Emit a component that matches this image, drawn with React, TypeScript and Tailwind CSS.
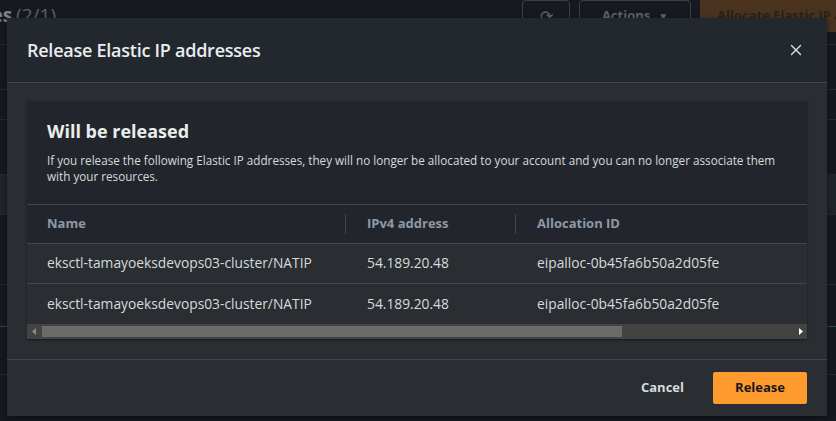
import { X } from 'lucide-react';

const rows = [
  { name: 'eksctl-tamayoeksdevops03-cluster/NATIP', ip: '54.189.20.48', alloc: 'eipalloc-0b45fa6b50a2d05fe' },
  { name: 'eksctl-tamayoeksdevops03-cluster/NATIP', ip: '54.189.20.48', alloc: 'eipalloc-0b45fa6b50a2d05fe' },
];

const bgLines = [45, 30, 55, 40, 70, 42, 48, 60];

function BackgroundPage() {
  return (
    <div className="h-[421px] w-[836px] overflow-hidden bg-[#161a20] font-['Open_Sans',sans-serif]">
      <div className="flex h-[45px] items-start border-b border-[#262b33]">
        <div className="flex w-[56px] shrink-0 justify-end overflow-hidden whitespace-nowrap pt-[3px] text-[19px] leading-[24px]">
          <span className="font-bold text-[#7d848c]">Elastic IP addresses</span>
          <span className="ml-1 text-[#5a616a]">(2/1)</span>
        </div>
        <div className="ml-[466px] flex h-[32px] w-[48px] shrink-0 items-center justify-center rounded-sm border border-[#3a4049] text-[#5a616a]">
          ⟳
        </div>
        <div className="ml-[9px] flex h-[32px] w-[112px] shrink-0 items-center justify-center gap-2 rounded-sm border border-[#3a4049] text-[13px] font-bold text-[#5a616a]">
          Actions <span className="text-[10px]">▼</span>
        </div>
        <div className="ml-[9px] flex h-[32px] min-w-0 flex-1 items-center overflow-hidden whitespace-nowrap bg-[#4a3420] pl-[17px] text-[13px] font-bold text-[#2a221a]">
          Allocate Elastic IP address
        </div>
      </div>
      {bgLines.map((h, i) => (
        <div
          key={i}
          className={`border-b ${i === 5 ? 'border-[#1d4e5a]' : 'border-[#262b33]'} ${i === 3 ? 'bg-[#20252c]' : ''}`}
          style={{ height: h }}
        />
      ))}
    </div>
  );
}

export default function App() {
  return (
    <div className="relative h-[421px] w-[836px] overflow-hidden">
      <BackgroundPage />

      <div className="absolute left-[7px] top-[18px] flex h-[398px] w-[820px] flex-col bg-[#2a2e33] font-['Open_Sans',sans-serif] shadow-[0_2px_6px_rgba(0,0,0,0.5)]">
        <div className="flex h-[65px] shrink-0 items-center justify-between border-b border-[#414750] bg-[#23272e] pl-5 pr-[22px]">
          <h2 className="text-[18px] font-semibold tracking-[-0.25px] text-[#eaeded]">Release Elastic IP addresses</h2>
          <X className="h-[18px] w-[18px] text-[#d5dbdb]" strokeWidth={2} />
        </div>

        <div className="px-5 pb-5 pt-[18px]">
          <div className="bg-[#22262c] shadow-[0_1px_2px_rgba(0,0,0,0.5)]">
            <div className="px-5 pb-5 pt-[18px]">
              <h3 className="text-[18px] font-bold leading-6 text-[#eaeded]">Will be released</h3>
              <p className="mt-[9px] text-[11.7px] leading-4 text-[#d5dbdb]">
                If you release the following Elastic IP addresses, they will no longer be allocated to your account and you can no longer associate them with your resources.
              </p>
            </div>

            <div className="overflow-hidden">
              <div className="flex h-[40px] items-center border-y border-[#414750] text-[13px] font-bold text-[#8d99a8]">
                <div className="w-[318px] pl-5">Name</div>
                <div className="flex w-[170px] items-center">
                  <span className="h-[20px] w-px bg-[#414750]" />
                  <span className="pl-[21px]">IPv4 address</span>
                </div>
                <div className="flex flex-1 items-center">
                  <span className="h-[20px] w-px bg-[#414750]" />
                  <span className="pl-[21px]">Allocation ID</span>
                </div>
              </div>
              {rows.map((r, i) => (
                <div
                  key={i}
                  className={`flex h-[40px] items-center whitespace-nowrap bg-[#2a2e33] text-[13.8px] text-[#d5dbdb] ${i === 0 ? 'border-b border-[#414750]' : ''}`}
                >
                  <div className="w-[318px] pl-5">{r.name}</div>
                  <div className="w-[170px] pl-[22px]">{r.ip}</div>
                  <div className="flex-1 pl-[22px]">{r.alloc}</div>
                </div>
              ))}
              <div className="flex h-[15px] items-center bg-[#434343]">
                <div className="flex w-[15px] items-center justify-center">
                  <svg width="5" height="7" viewBox="0 0 5 7">
                    <path d="M4 0L0 3.5L4 7Z" fill="#8a8a8a" />
                  </svg>
                </div>
                <div className="h-[11px] w-[580px] bg-[#6b6b6b]" />
                <div className="flex flex-1 items-center justify-end pr-[4px]">
                  <svg width="5" height="7" viewBox="0 0 5 7">
                    <path d="M1 0L5 3.5L1 7Z" fill="#ffffff" />
                  </svg>
                </div>
              </div>
            </div>
          </div>
        </div>

        <div className="flex flex-1 items-center justify-end gap-[29px] border-t border-[#414750] pr-5">
          <button type="button" className="text-[13px] font-bold text-[#d5dbdb]">
            Cancel
          </button>
          <button
            type="button"
            className="h-[32px] w-[94px] rounded-[2px] bg-[#ff9a2e] text-[13px] font-bold text-[#16191f]"
          >
            Release
          </button>
        </div>
      </div>
    </div>
  );
}
